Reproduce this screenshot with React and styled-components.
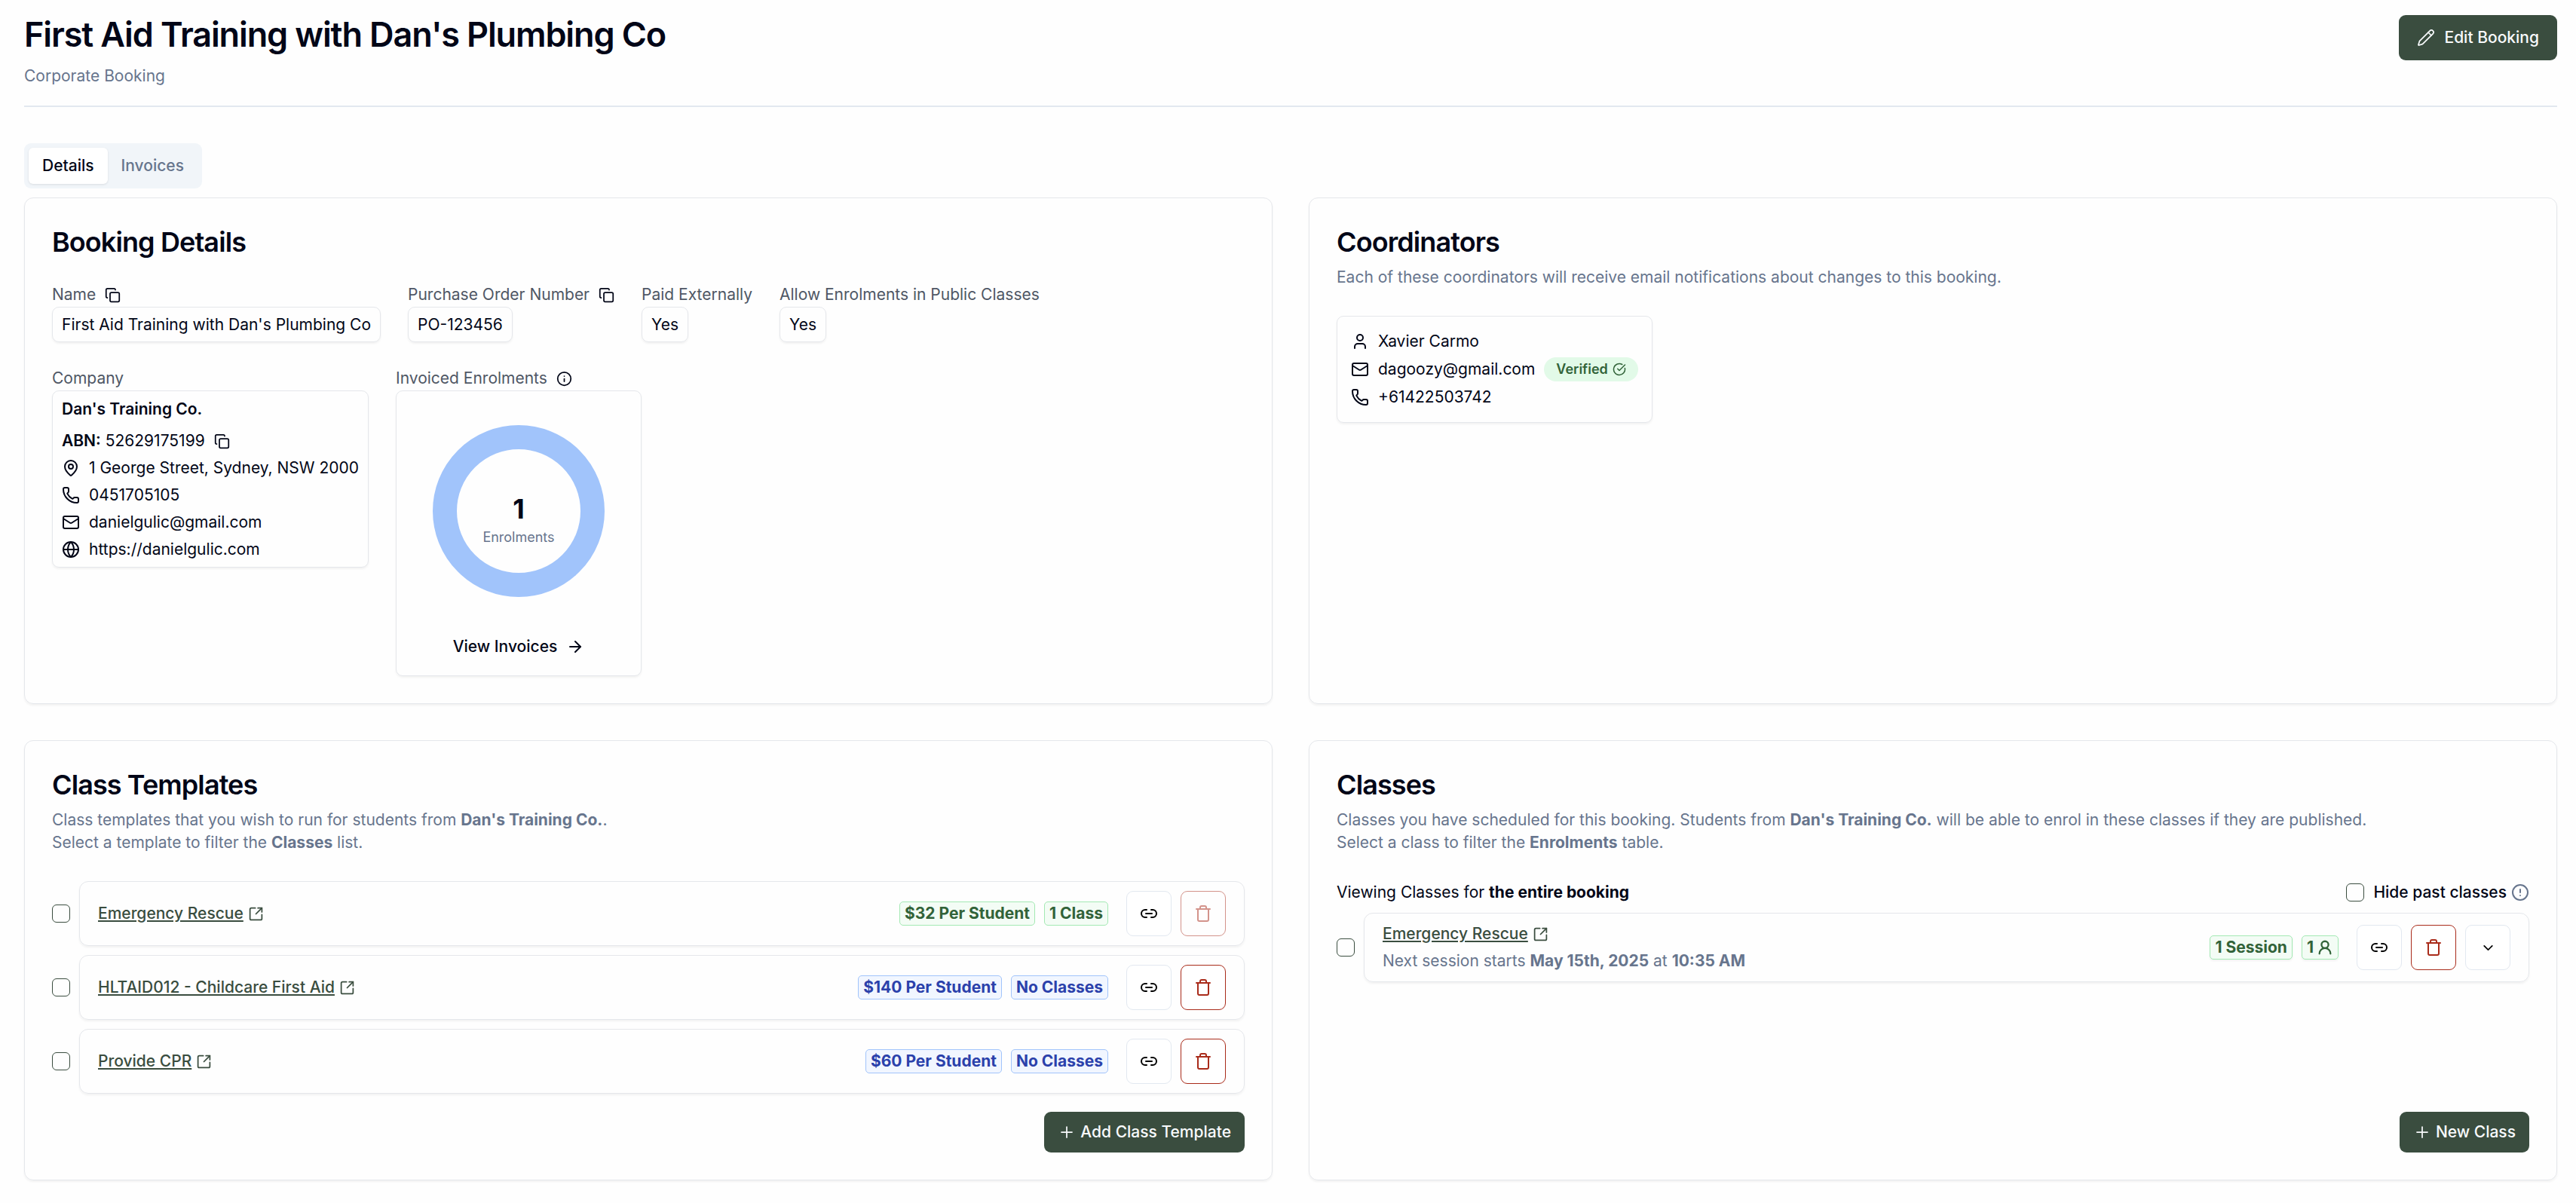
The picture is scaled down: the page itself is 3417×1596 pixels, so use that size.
import React from 'react'
import styled, { createGlobalStyle } from 'styled-components'
import {
  ArrowRight,
  ChevronDown,
  CircleAlert,
  CircleCheckBig,
  Copy,
  Globe,
  Info,
  Link2,
  Mail,
  MapPin,
  Pencil,
  Phone,
  Plus,
  SquareArrowOutUpRight,
  Trash,
  User,
  UserRound,
} from 'lucide-react'

const GlobalStyle = createGlobalStyle`
* {
  box-sizing: border-box;
}
body {
  margin: 0;
  background: #fefefe;
  color: #020617;
  font-family: Inter, "Liberation Sans", sans-serif;
  font-size: 21px;
  line-height: 30px;
}
h1, h2, p {
  margin: 0;
}
b {
  font-weight: 700;
}
svg {
  flex-shrink: 0;
}
button {
  font: inherit;
  cursor: pointer;
}
`

const Page = styled.main`
  padding: 20px 25px 30px 32px;
`
const Header = styled.header`
  display: flex;
  justify-content: space-between;
  align-items: flex-start;
  padding-bottom: 24px;
  border-bottom: 2px solid #e2e8f0;
  margin-bottom: 48px;
`
const PageTitle = styled.h1`
  font-size: 45px;
  line-height: 52px;
  font-weight: 600;
  letter-spacing: -0.025em;
`
const Subtitle = styled.p`
  margin-top: 14px;
  color: #67758d;
`
const PrimaryButton = styled.button`
  display: flex;
  align-items: center;
  gap: ${({ $large }) => ($large ? '12px' : '6px')};
  height: ${({ $large }) => ($large ? '60px' : '54px')};
  padding: 0 ${({ $large }) => ($large ? '24px' : '18px')};
  border: none;
  border-radius: 9px;
  background: #3a4d3f;
  color: #f8fafc;
  font-weight: 500;
`
const Tabs = styled.div`
  display: inline-flex;
  padding: 6px;
  border-radius: 9px;
  background: #f1f5f9;
`
const Tab = styled.button`
  height: 48px;
  padding: 0 18px;
  border: none;
  border-radius: 6px;
  font-weight: 500;
  background: ${({ $active }) => ($active ? '#ffffff' : 'transparent')};
  color: ${({ $active }) => ($active ? '#020617' : '#67758d')};
  box-shadow: ${({ $active }) => ($active ? '0 1px 3px rgba(0, 0, 0, 0.1)' : 'none')};
`
const Grid = styled.div`
  display: grid;
  grid-template-columns: 1fr 1fr;
  gap: 48px;
  margin-top: 12px;
`
const Panel = styled.section`
  display: flex;
  flex-direction: column;
  padding: 36px;
  border: 1px solid #e5e7eb;
  border-radius: 12px;
  box-shadow: 0 2px 3px rgba(0, 0, 0, 0.05);
`
const PanelTitle = styled.h2`
  font-size: 36px;
  line-height: 44px;
  font-weight: 600;
  letter-spacing: -0.025em;
`
const Description = styled.p`
  margin-top: 10px;
  color: #67758d;
`
const Fields = styled.div`
  display: flex;
  flex-wrap: wrap;
  align-items: flex-start;
  gap: 36px;
  margin-top: 36px;
`
const Field = styled.div`
  display: flex;
  flex-direction: column;
  align-items: flex-start;
  gap: 4px;
`
const FieldLabel = styled.div`
  display: flex;
  align-items: center;
  gap: 12px;
  line-height: 24px;
  color: #4f5765;

  svg {
    color: #020617;
  }
`
const IconButton = styled.button`
  display: flex;
  padding: 0;
  border: none;
  background: none;
  color: #020617;
`
const Box = styled.div`
  padding: 8px 12px 7px;
  border: 1px solid #e5e7eb;
  border-radius: 9px;
  box-shadow: 0 2px 3px rgba(0, 0, 0, 0.05);
`
const CompanyBox = styled(Box)`
  display: flex;
  flex-direction: column;
  gap: 6px;
  padding: 9px 12px 8px;
`
const CompanyName = styled.div`
  margin-bottom: 6px;
  font-weight: 600;
`
const Term = styled.span`
  font-weight: 600;
`
const InfoRow = styled.div`
  display: flex;
  align-items: center;
  gap: 12px;
`
const ChartBox = styled(Box)`
  display: flex;
  flex-direction: column;
  align-items: center;
  padding: 9px 12px 8px;
`
const Donut = styled.svg`
  width: 300px;
  height: 300px;
  font-family: inherit;
`
const TextButton = styled.button`
  display: flex;
  align-items: center;
  gap: 12px;
  height: 60px;
  padding: 0 24px;
  border: none;
  background: none;
  color: #020617;
  font-weight: 500;
`
const CoordinatorBox = styled(Box)`
  display: flex;
  flex-direction: column;
  align-self: flex-start;
  gap: 6px;
  margin-top: 36px;
  padding: 18px;
`
const Verified = styled.span`
  display: flex;
  align-items: center;
  gap: 6px;
  height: 32px;
  padding: 0 16px;
  border-radius: 16px;
  background: #e2fae8;
  color: #326339;
  font-size: 18px;
  font-weight: 600;
`
const List = styled.div`
  display: flex;
  flex-direction: column;
  gap: 12px;
  margin-top: ${({ $tight }) => ($tight ? '12px' : '36px')};
`
const ListRow = styled.div`
  display: flex;
  align-items: center;
  gap: 12px;
`
const Checkbox = styled.input.attrs({ type: 'checkbox' })`
  appearance: none;
  flex-shrink: 0;
  width: 24px;
  height: 24px;
  margin: 0;
  border: 1px solid #3a4d3f;
  border-radius: 6px;

  &:checked {
    background: #3a4d3f;
  }
`
const ItemCard = styled.div`
  flex: 1;
  display: flex;
  align-items: center;
  justify-content: space-between;
  padding: 12px 24px;
  border: 1px solid #e5e7eb;
  border-radius: 12px;
  box-shadow: 0 2px 3px rgba(0, 0, 0, 0.05);
`
const ItemInfo = styled.div`
  display: flex;
  flex-direction: column;
  gap: 6px;
`
const ItemLink = styled.a`
  display: flex;
  align-items: center;
  gap: 6px;
  color: #3a4d3f;
  font-weight: 500;
  text-decoration: none;

  span {
    text-decoration: underline;
  }
`
const Muted = styled.div`
  color: #67758d;
`
const Actions = styled.div`
  display: flex;
  align-items: center;
  gap: 12px;
`
const badgeColors = {
  green: { bg: '#f3fcf5', border: '#a3e9b3', text: '#326339' },
  blue: { bg: '#f1f6ff', border: '#a1c4fb', text: '#2b41ab' },
}
const Badges = styled.div`
  display: flex;
  gap: 12px;
  margin-right: 12px;
`
const Badge = styled.span`
  display: flex;
  align-items: center;
  gap: 4px;
  padding: 0 6px;
  border: 1px solid ${({ $tone }) => badgeColors[$tone].border};
  border-radius: 5px;
  background: ${({ $tone }) => badgeColors[$tone].bg};
  color: ${({ $tone }) => badgeColors[$tone].text};
  font-weight: 700;
  box-shadow: ${({ $raised }) => ($raised ? '0 2px 3px rgba(0, 0, 0, 0.05)' : 'none')};
`
const SquareButton = styled.button`
  display: flex;
  align-items: center;
  justify-content: center;
  width: 60px;
  height: 60px;
  padding: 0;
  border: 1px solid ${({ $danger }) => ($danger ? '#a92b1a' : '#e2e8f0')};
  border-radius: 9px;
  background: #ffffff;
  color: ${({ $danger }) => ($danger ? '#a92b1a' : '#000000')};

  &:disabled {
    opacity: 0.5;
  }
`
const ListHeader = styled.div`
  display: flex;
  align-items: center;
  justify-content: space-between;
  margin-top: 36px;
`
const HideLabel = styled.label`
  display: flex;
  align-items: center;
  gap: 12px;
  font-weight: 500;
`
const HideOption = styled.div`
  display: flex;
  align-items: center;
  gap: 6px;
  color: #67758d;

  label {
    color: #020617;
  }
`
const PanelFooter = styled.div`
  display: flex;
  justify-content: flex-end;
  margin-top: auto;
  padding-top: 24px;
`

const templates = [
  { name: 'Emergency Rescue', price: '$32 Per Student', classes: '1 Class', tone: 'green', locked: true },
  { name: 'HLTAID012 - Childcare First Aid', price: '$140 Per Student', classes: 'No Classes', tone: 'blue' },
  { name: 'Provide CPR', price: '$60 Per Student', classes: 'No Classes', tone: 'blue' },
]

const CopyButton = () => (
  <IconButton aria-label="Copy">
    <Copy size={21} />
  </IconButton>
)

const EnrolmentsChart = ({ count }) => (
  <Donut viewBox="0 0 300 300">
    <circle cx="150" cy="150" r="98" fill="none" stroke="#a1c4fb" strokeWidth="32" />
    <text x="150" y="160" textAnchor="middle" fontSize="36" fontWeight="700" fill="#020617">{count}</text>
    <text x="150" y="191" textAnchor="middle" fontSize="18" fill="#67758d">Enrolments</text>
  </Donut>
)

const BookingDetails = () => (
  <Panel>
    <PanelTitle>Booking Details</PanelTitle>
    <Fields>
      <Field>
        <FieldLabel>Name <CopyButton /></FieldLabel>
        <Box>First Aid Training with Dan's Plumbing Co</Box>
      </Field>
      <Field>
        <FieldLabel>Purchase Order Number <CopyButton /></FieldLabel>
        <Box>PO-123456</Box>
      </Field>
      <Field>
        <FieldLabel>Paid Externally</FieldLabel>
        <Box>Yes</Box>
      </Field>
      <Field>
        <FieldLabel>Allow Enrolments in Public Classes</FieldLabel>
        <Box>Yes</Box>
      </Field>
    </Fields>
    <Fields>
      <Field>
        <FieldLabel>Company</FieldLabel>
        <CompanyBox>
          <CompanyName>Dan's Training Co.</CompanyName>
          <InfoRow><span><Term>ABN:</Term> 52629175199</span> <CopyButton /></InfoRow>
          <InfoRow><MapPin size={24} /> 1 George Street, Sydney, NSW 2000</InfoRow>
          <InfoRow><Phone size={24} /> 0451705105</InfoRow>
          <InfoRow><Mail size={24} /> danielgulic@gmail.com</InfoRow>
          <InfoRow><Globe size={24} /> https://danielgulic.com</InfoRow>
        </CompanyBox>
      </Field>
      <Field>
        <FieldLabel>Invoiced Enrolments <Info size={21} /></FieldLabel>
        <ChartBox>
          <EnrolmentsChart count={1} />
          <TextButton>View Invoices <ArrowRight size={24} /></TextButton>
        </ChartBox>
      </Field>
    </Fields>
  </Panel>
)

const Coordinators = () => (
  <Panel>
    <PanelTitle>Coordinators</PanelTitle>
    <Description>
      Each of these coordinators will receive email notifications about changes to this booking.
    </Description>
    <CoordinatorBox>
      <InfoRow><User size={24} /> Xavier Carmo</InfoRow>
      <InfoRow>
        <Mail size={24} /> dagoozy@gmail.com
        <Verified>Verified <CircleCheckBig size={18} /></Verified>
      </InfoRow>
      <InfoRow><Phone size={24} /> +61422503742</InfoRow>
    </CoordinatorBox>
  </Panel>
)

const ClassTemplates = () => (
  <Panel>
    <PanelTitle>Class Templates</PanelTitle>
    <Description>
      Class templates that you wish to run for students from <b>Dan's Training Co.</b>.<br />
      Select a template to filter the <b>Classes</b> list.
    </Description>
    <List>
      {templates.map((item) => (
        <ListRow key={item.name}>
          <Checkbox aria-label={item.name} />
          <ItemCard>
            <ItemLink href="#"><span>{item.name}</span> <SquareArrowOutUpRight size={21} /></ItemLink>
            <Actions>
              <Badges>
                <Badge $tone={item.tone}>{item.price}</Badge>
                <Badge $tone={item.tone}>{item.classes}</Badge>
              </Badges>
              <SquareButton aria-label="Copy link"><Link2 size={24} /></SquareButton>
              <SquareButton $danger disabled={item.locked} aria-label="Delete"><Trash size={24} /></SquareButton>
            </Actions>
          </ItemCard>
        </ListRow>
      ))}
    </List>
    <PanelFooter>
      <PrimaryButton><Plus size={24} strokeWidth={1.75} /> Add Class Template</PrimaryButton>
    </PanelFooter>
  </Panel>
)

const Classes = () => (
  <Panel>
    <PanelTitle>Classes</PanelTitle>
    <Description>
      Classes you have scheduled for this booking. Students from <b>Dan's Training Co.</b> will be able to enrol in these classes if they are published.<br />
      Select a class to filter the <b>Enrolments</b> table.
    </Description>
    <ListHeader>
      <div>Viewing Classes for <b>the entire booking</b></div>
      <HideOption>
        <HideLabel><Checkbox /> Hide past classes</HideLabel>
        <CircleAlert size={24} />
      </HideOption>
    </ListHeader>
    <List $tight>
      <ListRow>
        <Checkbox aria-label="Emergency Rescue class" />
        <ItemCard>
          <ItemInfo>
            <ItemLink href="#"><span>Emergency Rescue</span> <SquareArrowOutUpRight size={21} /></ItemLink>
            <Muted>Next session starts <b>May 15th, 2025</b> at <b>10:35 AM</b></Muted>
          </ItemInfo>
          <Actions>
            <Badges>
              <Badge $tone="green" $raised>1 Session</Badge>
              <Badge $tone="green" $raised>1 <UserRound size={22} strokeWidth={2.5} /></Badge>
            </Badges>
            <SquareButton aria-label="Copy link"><Link2 size={24} /></SquareButton>
            <SquareButton $danger aria-label="Delete"><Trash size={24} /></SquareButton>
            <SquareButton aria-label="Expand"><ChevronDown size={21} /></SquareButton>
          </Actions>
        </ItemCard>
      </ListRow>
    </List>
    <PanelFooter>
      <PrimaryButton><Plus size={24} strokeWidth={1.75} /> New Class</PrimaryButton>
    </PanelFooter>
  </Panel>
)

const App = () => {
  return (
    <Page>
      <GlobalStyle />
      <Header>
        <div>
          <PageTitle>First Aid Training with Dan's Plumbing Co</PageTitle>
          <Subtitle>Corporate Booking</Subtitle>
        </div>
        <PrimaryButton $large><Pencil size={24} strokeWidth={1.75} /> Edit Booking</PrimaryButton>
      </Header>
      <Tabs role="tablist">
        <Tab role="tab" aria-selected="true" $active>Details</Tab>
        <Tab role="tab" aria-selected="false">Invoices</Tab>
      </Tabs>
      <Grid>
        <BookingDetails />
        <Coordinators />
        <ClassTemplates />
        <Classes />
      </Grid>
    </Page>
  )
}

export default App
